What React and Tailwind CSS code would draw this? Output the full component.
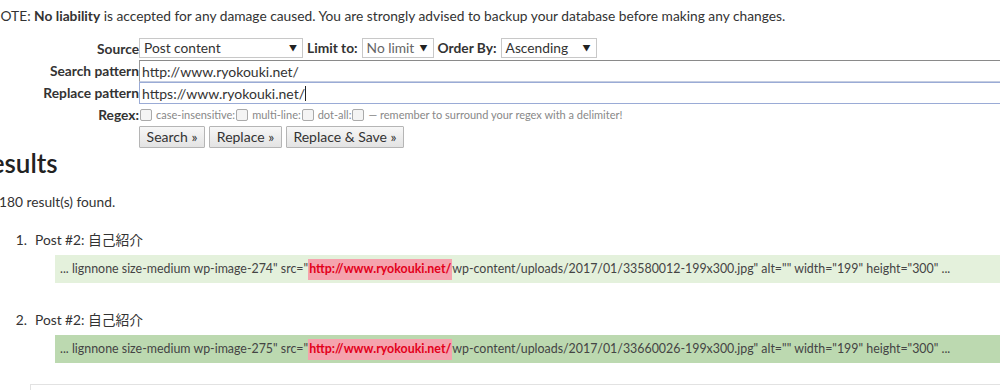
import React from "react";

const Select = ({ w, children, muted }) => (
  <div
    className={`h-[20px] ${w} border border-[#c8c8c8] bg-white flex items-center justify-between pl-[4px] pr-[5px] ${muted ? "text-[#666]" : "text-[#333]"}`}
  >
    <span>{children}</span>
    <span className="text-[8px] text-[#222]">▼</span>
  </div>
);

const Check = () => (
  <span className="inline-block w-[12px] h-[12px] rounded-[2px] border border-[#aaa] bg-[#f4f4f4] mx-[1px] align-[-1px]" />
);

const Btn = ({ w, children }) => (
  <button className={`h-[22px] ${w} border border-[#b5b5b5] rounded-[1px] bg-gradient-to-b from-[#f7f7f7] to-[#e3e3e3] text-[#333] text-[14px] leading-none`}>
    {children}
  </button>
);

const Snippet = ({ bg, pre, post }) => (
  <div className={`ml-[55px] h-[28px] w-[1000px] ${bg} flex items-center pl-[5px] text-[12.4px] text-[#444] whitespace-nowrap`}>
    <span>{pre}</span>
    <span className="bg-[#f5a3ae] text-[#e3001b] font-bold px-[1px] h-[21px] flex items-center">http://www.ryokouki.net/</span>
    <span>{post}</span>
  </div>
);

export default function App() {
  return (
    <div className="w-[1000px] h-[390px] overflow-hidden bg-white text-[#333] text-[13.75px] font-['Lato','Noto_Sans_CJK_JP',sans-serif]">
      <div className="ml-[-10px]">
        <p className="pt-[7px] leading-[18px] whitespace-nowrap">
          NOTE: <b>No liability</b> is accepted for any damage caused. You are strongly advised to backup your database before making any changes.
        </p>

        <div className="mt-[14px] grid grid-cols-[149px_1fr] whitespace-nowrap">
          <div className="h-[21px] flex items-center justify-end font-bold">Source</div>
          <div className="h-[21px] flex items-start gap-[4px] -mt-[1px]">
            <Select w="w-[164px]">Post content</Select>
            <span className="h-[20px] flex items-center font-bold">Limit to:</span>
            <Select w="w-[72px]" muted>No limit</Select>
            <span className="h-[20px] flex items-center font-bold">Order By:</span>
            <Select w="w-[96px]">Ascending</Select>
          </div>

          <div className="h-[22px] flex items-center justify-end font-bold">Search pattern</div>
          <div className="h-[22px] w-[1000px] border border-[#999] border-t-[#8a8a8a] border-b-[#c5cde0] bg-white flex items-center pl-[2px] text-[14px]">
            http://www.ryokouki.net/
          </div>

          <div className="h-[22px] flex items-center justify-end font-bold">Replace pattern</div>
          <div className="h-[22px] w-[1000px] border border-[#9aabd6] bg-white flex items-center pl-[2px] text-[14px]">
            https://www.ryokouki.net/<span className="inline-block w-[1px] h-[15px] bg-[#222]" />
          </div>

          <div className="h-[22px] flex items-center justify-end font-bold">Regex:</div>
          <div className="h-[22px] flex items-center text-[11px] text-[#888]">
            <Check />
            <span className="ml-[3px]">case-insensitive:</span>
            <Check />
            <span className="ml-[3px]">multi-line:</span>
            <Check />
            <span className="ml-[3px]">dot-all:</span>
            <Check />
            <span className="ml-[3px]">— remember to surround your regex with a delimiter!</span>
          </div>

          <div />
          <div className="h-[22px] flex gap-[4px]">
            <Btn w="w-[66px]">Search »</Btn>
            <Btn w="w-[73px]">Replace »</Btn>
            <Btn w="w-[118px]">Replace &amp; Save »</Btn>
          </div>
        </div>

        <h2 className="ml-[-15px] mt-[0px] text-[26px] leading-[30px] font-semibold text-[#222] whitespace-nowrap">Results</h2>

        <p className="ml-[9px] mt-[15px] leading-[18px]">180 result(s) found.</p>

        <ol className="ml-[10px] mt-[20px]">
          <li>
            <div className="flex leading-[18px]">
              <span className="w-[35px] text-right pr-[8px]">1.</span>
              <span>Post #2: 自己紹介</span>
            </div>
            <div className="mt-[6px]">
              <Snippet
                bg="bg-[#e4f1dc]"
                pre={'... lignnone size-medium wp-image-274" src="'}
                post={'wp-content/uploads/2017/01/33580012-199x300.jpg" alt="" width="199" height="300" ...'}
              />
            </div>
          </li>
          <li className="mt-[28px]">
            <div className="flex leading-[18px]">
              <span className="w-[35px] text-right pr-[8px]">2.</span>
              <span>Post #2: 自己紹介</span>
            </div>
            <div className="mt-[6px]">
              <Snippet
                bg="bg-[#bcd9b0]"
                pre={'... lignnone size-medium wp-image-275" src="'}
                post={'wp-content/uploads/2017/01/33660026-199x300.jpg" alt="" width="199" height="300" ...'}
              />
            </div>
          </li>
        </ol>

        <div className="ml-[40px] mt-[21px] h-[20px] border-t border-l border-[#e2e2e2]" />
      </div>
    </div>
  );
}
